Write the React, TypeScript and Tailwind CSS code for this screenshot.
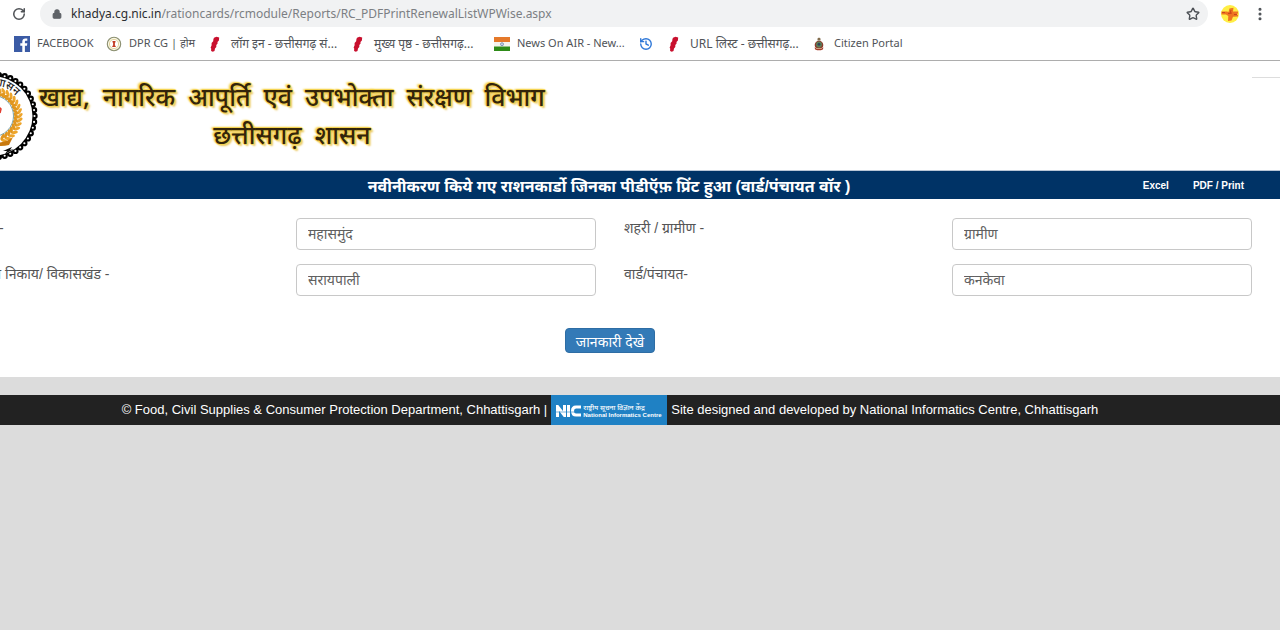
import React from "react";
import { Lock, RotateCw, Star, MoreVertical, History } from "lucide-react";

const scallops = Array.from({ length: 44 }, (_, i) => {
  const a = (i / 44) * Math.PI * 2;
  return { x: 50 + Math.cos(a) * 41.5, y: 50 + Math.sin(a) * 41.5 };
});

const leaves = Array.from({ length: 16 }, (_, i) => 68 - i * 9.5);

function StateSeal() {
  return (
    <svg viewBox="0 0 100 100" className="size-[100px] shrink-0" aria-hidden="true">
      <circle cx="50" cy="50" r="40" fill="none" stroke="#000" strokeWidth="2.6" />
      {scallops.map((p, i) => (
        <circle key={i} cx={p.x} cy={p.y} r="2.1" fill="#fff" stroke="#000" strokeWidth="2.1" />
      ))}
      <circle cx="50" cy="50" r="39.5" fill="#fff" />
      <defs>
        <path id="seal-arc" d="M 19.500 50 A 30.500 30.500 0 0 1 80.500 50" />
      </defs>
      {leaves.map((deg) => (
        <g key={deg} transform={`rotate(${deg} 50 50)`}>
          <ellipse cx="77" cy="49" rx="3.4" ry="1.500" transform="rotate(-50 77 49)" fill="#eda52c" />
          <ellipse cx="73" cy="49" rx="3.4" ry="1.500" transform="rotate(50 73 49)" fill="#e0961f" />
        </g>
      ))}
      <text fontSize="11" fontFamily="'Noto Sans', sans-serif" fontWeight="500" fill="#222">
        <textPath href="#seal-arc" startOffset="49">
          शासन
        </textPath>
      </text>
      <path d="M50 76 Q62 78 70 71 L66 79 Q58 81 50 79Z" fill="#c97a10" />
      <circle cx="50" cy="50" r="20.500" fill="#fff" stroke="#4a7f88" strokeWidth=".7" />
      <path d="M56 41l2 2-1 4" fill="none" stroke="#e23b2e" strokeWidth="1.500" />
      <path d="M60 85l9-4-2 3 4-1-9 5 2-3z" fill="#111" />
    </svg>
  );
}

function FacebookIcon() {
  return (
    <svg viewBox="0 0 16 16" className="size-4 shrink-0" aria-hidden="true">
      <path fill="#3b5ba5" d="M0 0h16v16H0z" />
      <path fill="#fff" d="M8.3 16V9.8H6.3V7.3h2V5.6C8.3 3.5 9.5 2.5 11.400 2.500h1.900v2.300h-1.300c-.9 0-1.100.4-1.100 1.100v1.400h2.400l-.3 2.500h-2.100V16z" />
    </svg>
  );
}

function DprIcon() {
  return (
    <svg viewBox="0 0 16 16" className="size-4 shrink-0" aria-hidden="true">
      <circle cx="8" cy="8" r="6.700" fill="#fbf8e4" stroke="#8b8f70" strokeWidth="1.100" />
      <circle cx="8" cy="8" r="4.600" fill="#fff" stroke="#d9c98a" strokeWidth=".8" />
      <path d="M6.500 5h3v1.600H8.900v3.200h.8V11H6.300V9.800h.8V6.600h-.6z" fill="#c23a22" />
    </svg>
  );
}

function MapIcon() {
  return (
    <svg viewBox="0 0 16 16" className="size-4 shrink-0" aria-hidden="true">
      <path fill="#c8102e" d="M6 1.800l2.500-1 2.700.7-.3 3-1.400 1.500.1 1.600-1.300 1.300v2l-1.300 1.500-.5 2.500-1.700.9-1.700-.8.1-2.400-.6-.8 1-2.500v-2.300l1.600-1.700.2-2z" />
    </svg>
  );
}

function FlagIcon() {
  return (
    <svg viewBox="0 0 16 16" className="size-4 shrink-0" aria-hidden="true">
      <path fill="#e5792a" d="M0 1h16v5H0z" />
      <path fill="#f4f3ee" d="M0 6h16v4.500H0z" />
      <path fill="#2e8b18" d="M0 10.500h16v4.500H0z" />
      <circle cx="8" cy="8.200" r="1.500" fill="#c9d3e2" stroke="#6d86ad" strokeWidth=".8" />
    </svg>
  );
}

function PoliceIcon() {
  return (
    <svg viewBox="0 0 16 16" className="size-4 shrink-0" aria-hidden="true">
      <path fill="#806b4c" d="M6.500 2.500L8 1.500l1.500 1v2h-3z" />
      <circle cx="8" cy="9" r="4.300" fill="#8d3b2c" />
      <circle cx="8" cy="8.500" r="2.900" fill="#5a8058" />
      <circle cx="8" cy="8.300" r="1.400" fill="#2f3f5c" />
      <path fill="#a63b2b" d="M3.500 11.500q4.500 2 9 0l-.7 2q-3.800 1.700-7.600 0z" />
      <path fill="#d3c39b" d="M5 11.800q3 1 6 0v.8q-3 1-6 0z" />
    </svg>
  );
}

function ExtensionIcon() {
  return (
    <svg viewBox="0 0 20 20" className="size-5" aria-hidden="true">
      <circle cx="10" cy="10" r="9" fill="#ffee45" />
      <path d="M1.500 7.500h5.500l1.500.5 1-3.500 4-.8-.5 3.800h5v2l-3 1 3 .3v1.700l-5 .3-1.500 3.700-3.500.4.300-5-2.300-1.500H1.500z" fill="#ee7420" />
      <path d="M8 9.500l4-.5M11 6l-1 4M2 8.500h3M14 10.500h3" stroke="#c9451b" strokeWidth="1" />
    </svg>
  );
}

function HistoryIcon() {
  return <History className="size-[14px] shrink-0 text-[#2f78d8]" strokeWidth={2.4} />;
}

const bookmarks = [
  { label: "FACEBOOK", icon: <FacebookIcon />, style: "w-[92px] text-[11px]" },
  { label: "DPR CG | होम", icon: <DprIcon />, style: "w-[102px] text-[11px]" },
  { label: "लॉग इन - छत्तीसगढ़ सं...", icon: <MapIcon />, style: "w-[143px] text-[12px]" },
  { label: "मुख्य पृष्ठ - छत्तीसगढ़...", icon: <MapIcon />, style: "w-[143px] text-[12px]" },
  { label: "News On AIR - New...", icon: <FlagIcon />, style: "w-[145px] text-[11px]" },
  { label: "", icon: <HistoryIcon />, style: "w-[28px] text-[11px]" },
  { label: "URL लिस्ट - छत्तीसगढ़...", icon: <MapIcon />, style: "w-[144px] text-[12px]" },
  { label: "Citizen Portal", icon: <PoliceIcon />, style: "w-[110px] text-[11px]" },
];

function BrowserBar() {
  return (
    <header className="border-b border-[#adadad] bg-white font-['Noto_Sans',sans-serif]">
      <div className="flex h-[27px] items-center">
        <button aria-label="Reload" className="ml-3 flex w-7 shrink-0 text-[#505357]">
          <RotateCw className="size-[14px]" strokeWidth={2.6} />
        </button>
        <div className="flex h-full min-w-0 flex-1 items-center rounded-full bg-[#f1f2f3] pr-2 pl-3">
          <Lock className="size-[10px] shrink-0 fill-[#5f6368] text-[#5f6368]" strokeWidth={3} />
          <span className="ml-[9px] flex-1 text-[12px] whitespace-nowrap text-[#7c7f83]">
            <span className="text-[#2b2d30]">khadya.cg.nic.in</span>
            /rationcards/rcmodule/Reports/RC_PDFPrintRenewalListWPWise.aspx
          </span>
          <button aria-label="Bookmark this page" className="text-[#4d5156]">
            <Star className="size-[14px]" strokeWidth={2.4} />
          </button>
        </div>
        <button aria-label="Extension" className="ml-3">
          <ExtensionIcon />
        </button>
        <button aria-label="Menu" className="mr-3 ml-3 text-[#4d5156]">
          <MoreVertical className="size-4" strokeWidth={2.6} />
        </button>
      </div>
      <nav className="flex h-[33px] items-center pl-[14px] text-[#505357]">
        {bookmarks.map((b, i) => (
          <a
            key={i}
            href="#"
            aria-label={b.label || "History"}
            className={`${b.style} flex shrink-0 items-center gap-[7px] whitespace-nowrap`}
          >
            {b.icon}
            {b.label}
          </a>
        ))}
      </nav>
    </header>
  );
}

function Field({ id, label, value }: { id: string; label: string; value: string }) {
  return (
    <>
      <label htmlFor={id} className="px-[14px] text-[14px] leading-5 whitespace-nowrap">
        {label}
      </label>
      <div className="px-[14px]">
        <select
          id={id}
          className="h-8 w-full appearance-none rounded border border-[#c8c8c8] bg-white px-[11px] text-[14px] text-[#606060]"
        >
          <option>{value}</option>
        </select>
      </div>
    </>
  );
}

function NicLogo() {
  return (
    <span className="flex h-[30px] w-[116px] items-center gap-[2px] bg-[#1f81c4] pt-[2px] pl-[5px] text-white">
      <svg viewBox="0 0 25 12" className="h-3 w-[25px] shrink-0" role="img" aria-label="NIC">
        <g fill="none" stroke="#fff" strokeWidth="3">
          <path d="M1.500 12V1.500L8.500 10.500V0" />
          <path d="M12.500 0v12" />
          <path d="M25 2h-5q-3.500 0-3.500 4t3.500 4h5" />
        </g>
        <path d="M0 7h25" stroke="#1f81c4" strokeWidth=".6" />
      </svg>
      <span className="flex flex-col font-bold whitespace-nowrap">
        <span className="font-['Noto_Sans',sans-serif] text-[7px] leading-[8px] font-medium">
          राष्ट्रीय सूचना विज्ञान केंद्र
        </span>
        <span className="text-[6px] leading-[6px]">National Informatics Centre</span>
      </span>
    </span>
  );
}

export default function App() {
  return (
    <div className="min-h-screen overflow-x-hidden bg-[#dcdcdc] font-['Liberation_Sans','Noto_Sans',sans-serif] text-[#555]">
      <BrowserBar />
      <div className="bg-white">
        <div className="flex h-[110px] items-start justify-between border-b border-[#b9c6d6]">
          <div className="-ml-[57px] flex items-start pt-[5px]">
            <StateSeal />
            <h1 className="-ml-1 pt-[11px] text-center font-['Noto_Sans',sans-serif] text-[25px] leading-[38px] font-medium whitespace-pre text-[#33240a] [text-shadow:1px_0_1px_#f5d24e,-1px_0_1px_#f5d24e,0_1px_1px_#f5d24e,0_-1px_1px_#f5d24e,2px_2px_2px_#e9c65a,-2px_-1px_2px_#f7dc74]">
              {"खाद्य,  नागरिक  आपूर्ति  एवं  उपभोक्ता  संरक्षण  विभाग"}
              <br />
              {"छत्तीसगढ़  शासन"}
            </h1>
          </div>
          <div className="mt-4 w-7 border-t border-[#ddd]" />
        </div>
        <div className="-ml-[46px] grid h-7 grid-cols-[1fr_auto_1fr] items-center bg-[#003366] pr-9 text-white">
          <span />
          <h2 className="pt-1 pl-5 text-[16px] leading-6 font-bold whitespace-nowrap">
            नवीनीकरण किये गए राशनकार्डो जिनका पीडीऍफ़ प्रिंट हुआ (वार्ड/पंचायत वॉर )
          </h2>
          <div className="flex justify-end gap-6 pt-px text-[10px] font-bold">
            <a href="#">Excel</a>
            <a href="#">PDF / Print</a>
          </div>
        </div>
        <form className="mr-[14px] -ml-[46px] pt-[19px] pb-6" onSubmit={(e) => e.preventDefault()}>
          <div className="grid grid-cols-4 gap-y-[14px]">
            <Field id="district" label="जिला -" value="महासमुंद" />
            <Field id="area" label="शहरी / ग्रामीण -" value="ग्रामीण" />
            <Field id="block" label="नगरीय निकाय/ विकासखंड -" value="सरायपाली" />
            <Field id="ward" label="वार्ड/पंचायत-" value="कनकेवा" />
          </div>
          <div className="mt-8 flex justify-center">
            <button className="h-[25px] rounded border border-[#2e6da4] bg-[#337ab7] px-[10px] pt-px text-[14px] leading-6 text-white">
              जानकारी देखे
            </button>
          </div>
        </form>
      </div>
      <footer className="mt-[18px] bg-[#222]">
        <div className="mr-[14px] -ml-[46px] flex h-[30px] items-center justify-center gap-1 text-[13px] whitespace-nowrap text-white">
          <span>© Food, Civil Supplies &amp; Consumer Protection Department, Chhattisgarh |</span>
          <NicLogo />
          <span>Site designed and developed by National Informatics Centre, Chhattisgarh</span>
        </div>
      </footer>
    </div>
  );
}
